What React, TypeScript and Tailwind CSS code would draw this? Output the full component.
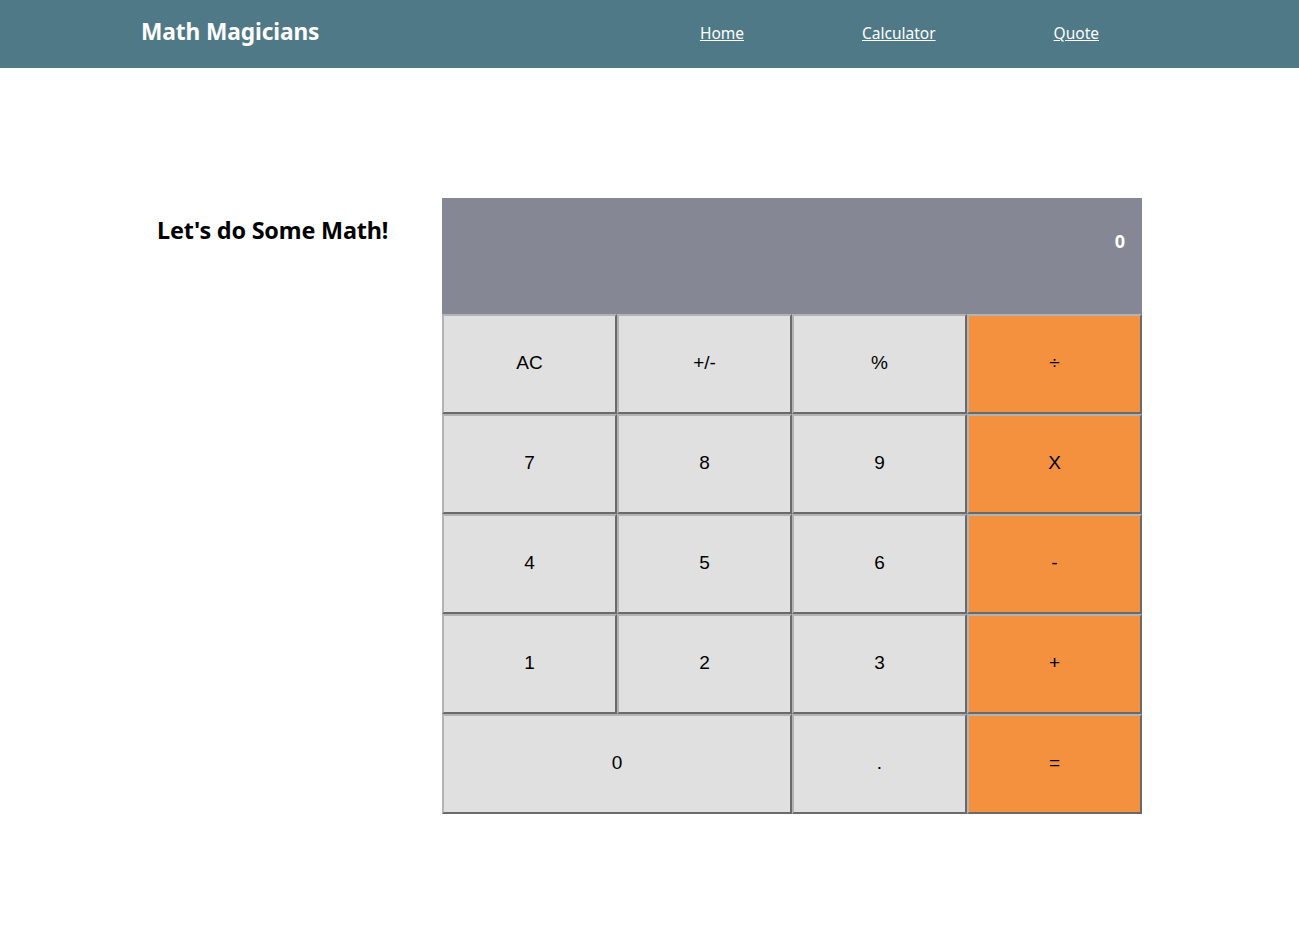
import React from 'react';

const keys: { label: string; span?: boolean; op?: boolean }[] = [
  { label: 'AC' },
  { label: '+/-' },
  { label: '%' },
  { label: '÷', op: true },
  { label: '7' },
  { label: '8' },
  { label: '9' },
  { label: 'X', op: true },
  { label: '4' },
  { label: '5' },
  { label: '6' },
  { label: '-', op: true },
  { label: '1' },
  { label: '2' },
  { label: '3' },
  { label: '+', op: true },
  { label: '0', span: true },
  { label: '.' },
  { label: '=', op: true },
];

export default function App() {
  return (
    <div className="min-h-screen bg-white font-['Liberation_Sans',Arial,sans-serif]">
      {/* Nav bar */}
      <header className="h-[68px] bg-[#4f7987] flex items-center justify-between pl-[141px] pr-[200px] font-['Noto_Sans',sans-serif]">
        <h1 className="text-white text-[22.7px] font-bold tracking-[-0.1px] pb-[3px]">Math Magicians</h1>
        <nav className="flex gap-[118px] text-white text-[15.5px] pb-[1px]">
          <a href="#" className="underline">Home</a>
          <a href="#" className="underline">Calculator</a>
          <a href="#" className="underline">Quote</a>
        </nav>
      </header>

      <main className="flex items-start pt-[130px] pl-[157px]">
        <h2 className="w-[285px] mt-[15px] text-[23.4px] font-bold text-black font-['Noto_Sans',sans-serif] tracking-[-0.2px]">
          Let's do Some Math!
        </h2>

        <div className="w-[700px]">
          <div className="h-[116px] bg-[#858794] flex justify-end pr-[17px] pt-[32px]">
            <span className="text-white text-[18px] font-bold font-['Noto_Sans',sans-serif] leading-[22px]">0</span>
          </div>
          <div className="grid grid-cols-4">
            {keys.map((k) => (
              <button
                key={k.label}
                className={`h-[100px] border-2 border-t-[#b3b3b3] border-l-[#b3b3b3] border-r-[#6a6a6a] border-b-[#6a6a6a] text-[19px] text-black pb-[1px] ${
                  k.op ? 'bg-[#f4913e]' : 'bg-[#e0e0e0]'
                } ${k.span ? 'col-span-2' : ''}`}
              >
                {k.label}
              </button>
            ))}
          </div>
        </div>
      </main>
    </div>
  );
}
